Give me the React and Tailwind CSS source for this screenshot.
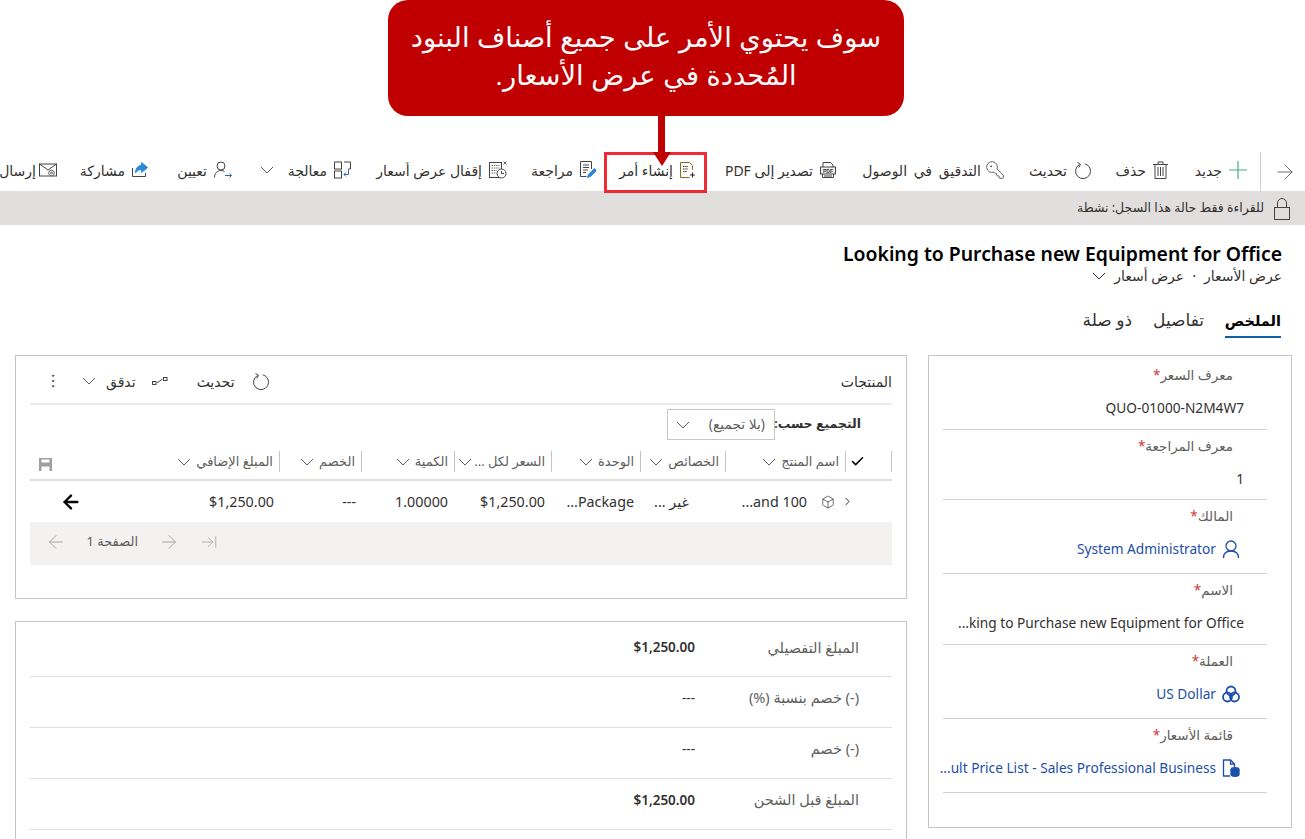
import React from 'react';
import { KeyRound, ArrowRight, ArrowLeft, Check, Box, MoreVertical, ArrowRightToLine, ChevronRight } from 'lucide-react';

const Chev = ({ className = 'text-[#605e5c]' }) => (
    <svg width="14" height="8" viewBox="0 0 14 8" fill="none" stroke="currentColor" className={`shrink-0 ${className}`}>
        <path d="M1 1l6 6 6-6" />
    </svg>
);

const Doc = ({ children, w = 18 }) => (
    <svg width={w} height="18" viewBox={`0 0 ${w} 18`} fill="none" stroke="#444" strokeWidth="1" className="shrink-0">{children}</svg>
);

const NewIcon = () => (
    <svg width="18" height="18" viewBox="0 0 18 18" fill="none" stroke="#45b07a" strokeWidth="1.200" className="shrink-0">
        <path d="M9 0v18M0 9h18" />
    </svg>
);

const TrashIcon = () => (
    <Doc w={15}>
        <path d="M0 3.500h15M5 3.500V1h5v2.500" />
        <path d="M2 3.500v14h11v-14" />
        <path d="M5 6v9M7.500 6v9M10 6v9" />
    </Doc>
);

const Refresh = ({ size = 18 }) => (
    <svg width={size} height={size} viewBox="0 0 18 18" fill="none" stroke="#444" strokeWidth="1" className="shrink-0">
        <path d="M10.800 2.800A7.500 7.500 0 1 1 5.500 3.500" />
        <path d="M3.500 1.500L6.500 3.300 4.800 6.500" />
    </svg>
);

const PdfIcon = () => (
    <Doc w={16}>
        <path d="M3 6V1.500h7.500L13 4v2" />
        <rect x=".5" y="6" width="15" height="7" fill="#eee" stroke="#444" />
        <text x="8" y="11.500" textAnchor="middle" fontSize="5" fontWeight="700" fill="#333" stroke="none" fontFamily="Liberation Sans, sans-serif">PDF</text>
        <path d="M2.500 13v3.500h11V13" />
        <path d="M4 15h8" />
    </Doc>
);

const OrderIcon = () => (
    <Doc w={15}>
        <path d="M12.500 9V4.500l-3-3h-9v15h9" stroke="#8a6d1c" />
        <path d="M3 5.500h5M3 8h5M3 10.500h4" stroke="#333" strokeDasharray="1.500 .7" />
        <path d="M12.500 11.500v5M10 14h5" stroke="#222" />
    </Doc>
);

const ReviewIcon = () => (
    <Doc w={16}>
        <path d="M11.500 8V.5H.5v15h6" />
        <path d="M3 4h6M3 6.500h6M3 9h5M3 11.500h3" />
        <path d="M7.500 16.500l1-3 6-6 2 2-6 6z" fill="#2b88d8" stroke="#2b88d8" />
    </Doc>
);

const CloseQuoteIcon = () => (
    <Doc>
        <rect x=".5" y="1.500" width="12" height="15" />
        <path d="M2.500 4.500h8M2.500 7h8M2.500 9.500h5M2.500 12h4" stroke="#666" strokeDasharray="1.500 .8" />
        <circle cx="12.500" cy="12.500" r="4.500" fill="#fff" />
        <path d="M12.500 10v2.500h2.500" />
        <path d="M14.500 .5l3 3M17.500 .5l-3 3" stroke="#666" />
    </Doc>
);

const ProcessIcon = () => (
    <Doc w={17}>
        <rect x=".5" y="1" width="7" height="7" />
        <rect x=".5" y="10" width="7" height="7" />
        <path d="M10 1h6.500v7H14" stroke="#444" />
        <path d="M14.500 8.500v5H10M11.800 11.500L10 13.500l1.800 2" stroke="#2b6cb0" />
    </Doc>
);

const AssignIcon = () => (
    <Doc>
        <circle cx="7" cy="5" r="4" />
        <path d="M.5 16.500c0-4 2.500-7 6.500-7 1.500 0 2.500.3 3.500 1" />
        <path d="M11 14.500h6.500M15.500 12.500l2 2-2 2" stroke="#2b6cb0" />
    </Doc>
);

const ShareIcon = () => (
    <Doc w={16}>
        <path d="M.5 7v8.500h13V12" />
        <path d="M9.500 1.500v3C5.500 4.500 3.500 8 3.500 12 5 9.500 7 8.500 9.500 8.500v3L15.500 6.500z" fill="#2b88d8" stroke="#2b88d8" />
    </Doc>
);

const SendIcon = () => (
    <Doc>
        <rect x=".5" y="3" width="17" height="12" />
        <path d="M.5 3l8.500 6 8.500-6" />
        <circle cx="12.500" cy="12" r="2.800" fill="#fff" stroke="#666" />
        <circle cx="12.500" cy="12" r="1" stroke="#666" />
    </Doc>
);

const LockIcon = () => (
    <svg width="18" height="22" viewBox="0 0 18 22" fill="none" stroke="#444" className="shrink-0">
        <rect x="1.500" y="9.500" width="15" height="12" />
        <path d="M4.500 9.500V5a4.500 4.500 0 0 1 9 0v4.500" />
    </svg>
);

const FlowIcon = () => (
    <svg width="16" height="16" viewBox="0 0 16 16" fill="none" stroke="#444" className="shrink-0">
        <rect x=".5" y="8.500" width="3.500" height="3" />
        <rect x="11.500" y="4.500" width="3.500" height="3" />
        <path d="M5 10l5.500-4" />
    </svg>
);

const SaveIcon = () => (
    <svg width="13" height="13" viewBox="0 0 13 13" className="shrink-0">
        <path d="M0 0h13v13H0z" fill="#a19f9d" />
        <path d="M2.500 1.500h8v3h-8zM2.500 8.500h8v4.500h-8z" fill="#fff" />
    </svg>
);

const PersonIcon = () => (
    <svg width="18" height="18" viewBox="0 0 18 18" fill="none" stroke="#1e4fa8" strokeWidth="1.300" className="shrink-0">
        <circle cx="9" cy="6" r="5" />
        <path d="M1.500 18c0-4.500 3-7 7.500-7s7.500 2.500 7.500 7" />
    </svg>
);

const CurrencyIcon = () => (
    <svg width="18" height="18" viewBox="0 0 18 18" fill="none" stroke="#1e4fa8" strokeWidth="1.800" className="shrink-0">
        <circle cx="9" cy="6" r="4.500" />
        <circle cx="5.500" cy="12" r="4.500" />
        <circle cx="12.500" cy="12" r="4.500" />
    </svg>
);

const PriceListIcon = () => (
    <svg width="18" height="18" viewBox="0 0 18 18" fill="none" stroke="#1e4fa8" strokeWidth="1.300" className="shrink-0">
        <path d="M8 17H1.500V1h7l4 4v3" />
        <path d="M8.500 1v4h4" />
        <ellipse cx="13" cy="10.500" rx="4" ry="1.800" fill="#1e4fa8" />
        <path d="M9 11v4.500c0 1 1.800 1.800 4 1.800s4-.8 4-1.800V11" fill="#1e4fa8" />
    </svg>
);

const commands = [
    { label: 'جديد', icon: <NewIcon />, width: 'w-[79px] gap-[7px]' },
    { label: 'حذف', icon: <TrashIcon />, width: 'w-[76px] gap-[7px]' },
    { label: 'تحديث', icon: <Refresh />, width: 'w-[88px] gap-[7px]' },
    { label: 'التدقيق في الوصول', icon: <KeyRound size={20} strokeWidth={1} className="-mr-[1px] shrink-0 text-[#444] -scale-x-100" />, width: 'w-[168px] gap-[4px] [word-spacing:3px]' },
    { label: 'تصدير إلى PDF', icon: <PdfIcon />, width: 'w-[141px] gap-[7px]' },
    { label: 'إنشاء أمر', icon: <OrderIcon />, width: 'w-[99px] gap-[7px]' },
    { label: 'مراجعة', icon: <ReviewIcon />, width: 'w-[89px] gap-[7px]' },
    { label: 'إقفال عرض أسعار', icon: <CloseQuoteIcon />, width: 'w-[156px] gap-[7px]' },
    { label: 'معالجة', icon: <ProcessIcon />, chevron: true, width: 'w-[119px] gap-[7px]' },
    { label: 'تعيين', icon: <AssignIcon />, width: 'w-[84px] gap-[7px]' },
    { label: 'مشاركة', icon: <ShareIcon />, width: 'w-[91px] gap-[7px]' },
    { label: 'إرسال', icon: <SendIcon />, width: 'w-[57px] gap-[3px]' },
];

const columns = [
    { label: 'اسم المنتج', width: 'w-[120px] gap-[5px]' },
    { label: 'الخصائص', width: 'w-[85px] gap-[5px]' },
    { label: 'الوحدة', width: 'w-[89px] gap-[5px]' },
    { label: 'السعر لكل ...', width: 'w-[97px] gap-[2px]' },
    { label: 'الكمية', width: 'w-[93px] gap-[5px]' },
    { label: 'الخصم', width: 'w-[82px] gap-[5px]' },
    { label: 'المبلغ الإضافي', width: 'w-[107px] gap-[5px]' },
];

const fields = [
    { label: 'معرف السعر', value: 'QUO-01000-N2M4W7', h: 'h-[71px]' },
    { label: 'معرف المراجعة', value: '1', h: 'h-[70px]' },
    { label: 'المالك', value: 'System Administrator', link: true, icon: <PersonIcon />, h: 'h-[74px]' },
    { label: 'الاسم', value: 'king to Purchase new Equipment for Office...', h: 'h-[71px]' },
    { label: 'العملة', value: 'US Dollar', link: true, icon: <CurrencyIcon />, h: 'h-[74px]' },
    { label: 'قائمة الأسعار', value: 'ult Price List - Sales Professional Business...', link: true, icon: <PriceListIcon />, h: 'h-[74px]' },
];

const totals = [
    { label: 'المبلغ التفصيلي', value: '$1,250.00', bold: true, h: 'h-[50px]' },
    { label: '(-) خصم بنسبة (%)', value: '---', h: 'h-[51px]' },
    { label: '(-) خصم', value: '---', h: 'h-[51px]' },
    { label: 'المبلغ قبل الشحن', value: '$1,250.00', bold: true, h: 'h-[51px]' },
];

const App = () => {
    return (
        <div dir="rtl" className="relative h-[839px] w-[1305px] overflow-hidden bg-white text-[#323130] font-['Noto_Sans','DejaVu_Sans',sans-serif]">
            {/* annotation */}
            <div className="absolute left-[388px] top-0 z-10 flex h-[116px] w-[516px] items-center justify-center rounded-[20px] bg-[#c00000] pb-[2px] text-center text-[27.3px] leading-[38px] text-white font-['Liberation_Sans','DejaVu_Sans',sans-serif]">
                <p>سوف يحتوي الأمر على جميع أصناف البنود<br />المُحددة في عرض الأسعار.</p>
            </div>
            <div className="absolute left-[658px] top-[116px] z-10 h-[37px] w-[7px] bg-[#c00000]" />
            <div className="absolute left-[653px] top-[152px] z-10 h-0 w-0 border-x-[9px] border-t-[14px] border-x-transparent border-t-[#c00000]" />
            <div className="absolute left-[604px] top-[152px] z-[5] h-[41px] w-[103px] border-[3px] border-[#ee2b35]" />

            {/* command bar */}
            <div className="mt-[152px] flex h-[40px] items-center overflow-hidden border-b border-[#e1dfdd]">
                <div className="flex h-full w-[45px] shrink-0 items-center justify-center border-l border-[#d2d0ce] pl-[3px]">
                    <ArrowRight size={24} strokeWidth={0.9} className="text-[#605e5c]" />
                </div>
                <div className="mr-[13px] flex items-center pb-[3px]">
                    {commands.map((c) => (
                        <div key={c.label} className={`flex shrink-0 items-center text-[14px] whitespace-nowrap ${c.width}`}>
                            {c.icon}
                            <span>{c.label}</span>
                            {c.chevron && <Chev className="mr-[7px] text-[#605e5c]" />}
                        </div>
                    ))}
                </div>
            </div>

            {/* read only notice */}
            <div className="flex h-[33px] items-center gap-[9px] bg-[#e1dfdd] pr-[14px] text-[12.5px]">
                <LockIcon />
                <span>للقراءة فقط حالة هذا السجل: نشطة</span>
            </div>

            {/* title */}
            <div className="pr-[23px] pt-[15px]">
                <h1 className="text-[19.4px] leading-[28px] font-semibold text-black">Looking to Purchase new Equipment for Office</h1>
                <div className="flex items-center gap-[8px] text-[14px] leading-[16px]">
                    <span>عرض الأسعار</span>
                    <span>·</span>
                    <span>عرض أسعار</span>
                    <Chev className="text-[#323130]" />
                </div>
            </div>

            {/* tabs */}
            <div className="mr-[24px] mt-[24px] flex text-[17px] leading-[24px]">
                <div className="w-[56px] border-b-2 border-[#115ea3] pb-[4px] text-[14.5px] font-semibold text-black">الملخص</div>
                <div className="mr-[21px] w-[52px] pb-[4px]">تفاصيل</div>
                <div className="mr-[20px] w-[52px] pb-[4px]">ذو صلة</div>
            </div>

            <div className="mr-[13px] mt-[17px] flex items-start gap-[21px]">
                {/* form card */}
                <div className="h-[473px] w-[364px] shrink-0 border border-[#c8c6c4] px-[24px] pt-[3px]">
                    <div className="w-[324px]">
                        {fields.map((f) => (
                            <div key={f.label} className={`${f.h} border-b border-[#d2d0ce] pr-[34px]`}>
                                <div className="pt-[4px] text-[13.5px] leading-[24px] text-[#605e5c]">
                                    {f.label}<span className="text-[#d13438]">*</span>
                                </div>
                                <div className={`mt-[11px] flex items-center gap-[6px] whitespace-nowrap text-[13.7px] leading-[20px] ${f.link ? '-mr-[7px] text-[#1e4fa8]' : '-mr-[11px]'}`}>
                                    {f.icon}
                                    <span>{f.value}</span>
                                </div>
                            </div>
                        ))}
                    </div>
                </div>

                {/* main column */}
                <div className="flex w-[892px] shrink-0 flex-col gap-[22px]">
                    <div className="h-[244px] border border-[#c8c6c4] px-[14px]">
                        <div className="flex h-[49px] items-center justify-between border-b-2 border-[#edebe9] pt-[3px]">
                            <span className="text-[14px]">المنتجات</span>
                            <div className="flex items-center pl-[14px] text-[14px]">
                                <Refresh />
                                <span className="mr-[17px]">تحديث</span>
                                <span className="mr-[29px]"><FlowIcon /></span>
                                <span className="mr-[16px]">تدقق</span>
                                <Chev className="mr-[10px] text-[#605e5c]" />
                                <MoreVertical size={18} strokeWidth={1} className="mr-[20px]" />
                            </div>
                        </div>
                        <div className="flex h-[39px] items-center pr-[31px]">
                            <span className="w-[85px] whitespace-nowrap text-[12.5px] font-semibold">التجميع حسب:</span>
                            <div className="mr-[1px] flex h-[31px] w-[108px] items-center justify-between border border-[#c8c6c4] pl-[8px] pr-[9px] text-[13.8px] text-[#605e5c]">
                                <span>(بلا تجميع)</span>
                                <Chev />
                            </div>
                        </div>
                        <div className="flex h-[37px] items-center border-b-2 border-[#e1dfdd] text-[13px] text-[#605e5c]">
                            <div className="flex h-[21px] w-[46px] items-center justify-end border-r border-[#c8c6c4] pl-[4px]">
                                <Check size={15} strokeWidth={2.5} className="text-black" />
                            </div>
                            {columns.map((c) => (
                                <div key={c.label} className={`flex h-[21px] items-center border-r border-[#c8c6c4] pr-[6px] whitespace-nowrap ${c.width}`}>
                                    <span>{c.label}</span>
                                    <Chev />
                                </div>
                            ))}
                            <span className="mr-[121px] mt-[6px]"><SaveIcon /></span>
                        </div>
                        <div className="flex h-[41px] items-center text-[14.3px]">
                            <div className="flex w-[166px] items-center pr-[38px]">
                                <ChevronRight size={13} strokeWidth={1.5} className="text-black" />
                                <Box size={14} strokeWidth={1.25} className="mr-[6px] shrink-0" />
                                <span className="mr-[14px]">100 and...</span>
                            </div>
                            <div className="w-[85px] pr-[37px]">غير ...</div>
                            <div className="w-[89px] pr-[7px]">Package...</div>
                            <div className="w-[97px] pr-[7px]">$1,250.00</div>
                            <div className="w-[93px] pr-[7px]">1.00000</div>
                            <div className="w-[82px] pr-[6px]">---</div>
                            <div className="flex w-[218px] items-center justify-between pr-[6px]">
                                <span>$1,250.00</span>
                                <ArrowLeft size={22} strokeWidth={2.5} className="ml-[-2px] text-black" />
                            </div>
                        </div>
                        <div className="flex h-[43px] items-center bg-[#f3f2f1] pb-[3px] pr-[674px] text-[13px] text-[#a19f9d]">
                            <ArrowRightToLine size={18} strokeWidth={1} />
                            <ArrowRight size={22} strokeWidth={1} className="mr-[20px]" />
                            <span className="mr-[20px] text-[#605e5c]">الصفحة 1</span>
                            <ArrowLeft size={22} strokeWidth={1} className="mr-[19px]" />
                        </div>
                    </div>

                    <div className="h-[230px] border border-[#c8c6c4] px-[14px] pt-[5px]">
                        {totals.map((t) => (
                            <div key={t.label} className={`flex items-center border-b border-[#e1dfdd] pb-[8px] pr-[33px] ${t.h}`}>
                                <span className="w-[164px] text-[14.5px] text-[#605e5c]">{t.label}</span>
                                <span className={`text-[13.5px] ${t.bold ? 'font-semibold' : ''}`}>{t.value}</span>
                            </div>
                        ))}
                    </div>
                </div>
            </div>
        </div>
    );
};

export default App;
